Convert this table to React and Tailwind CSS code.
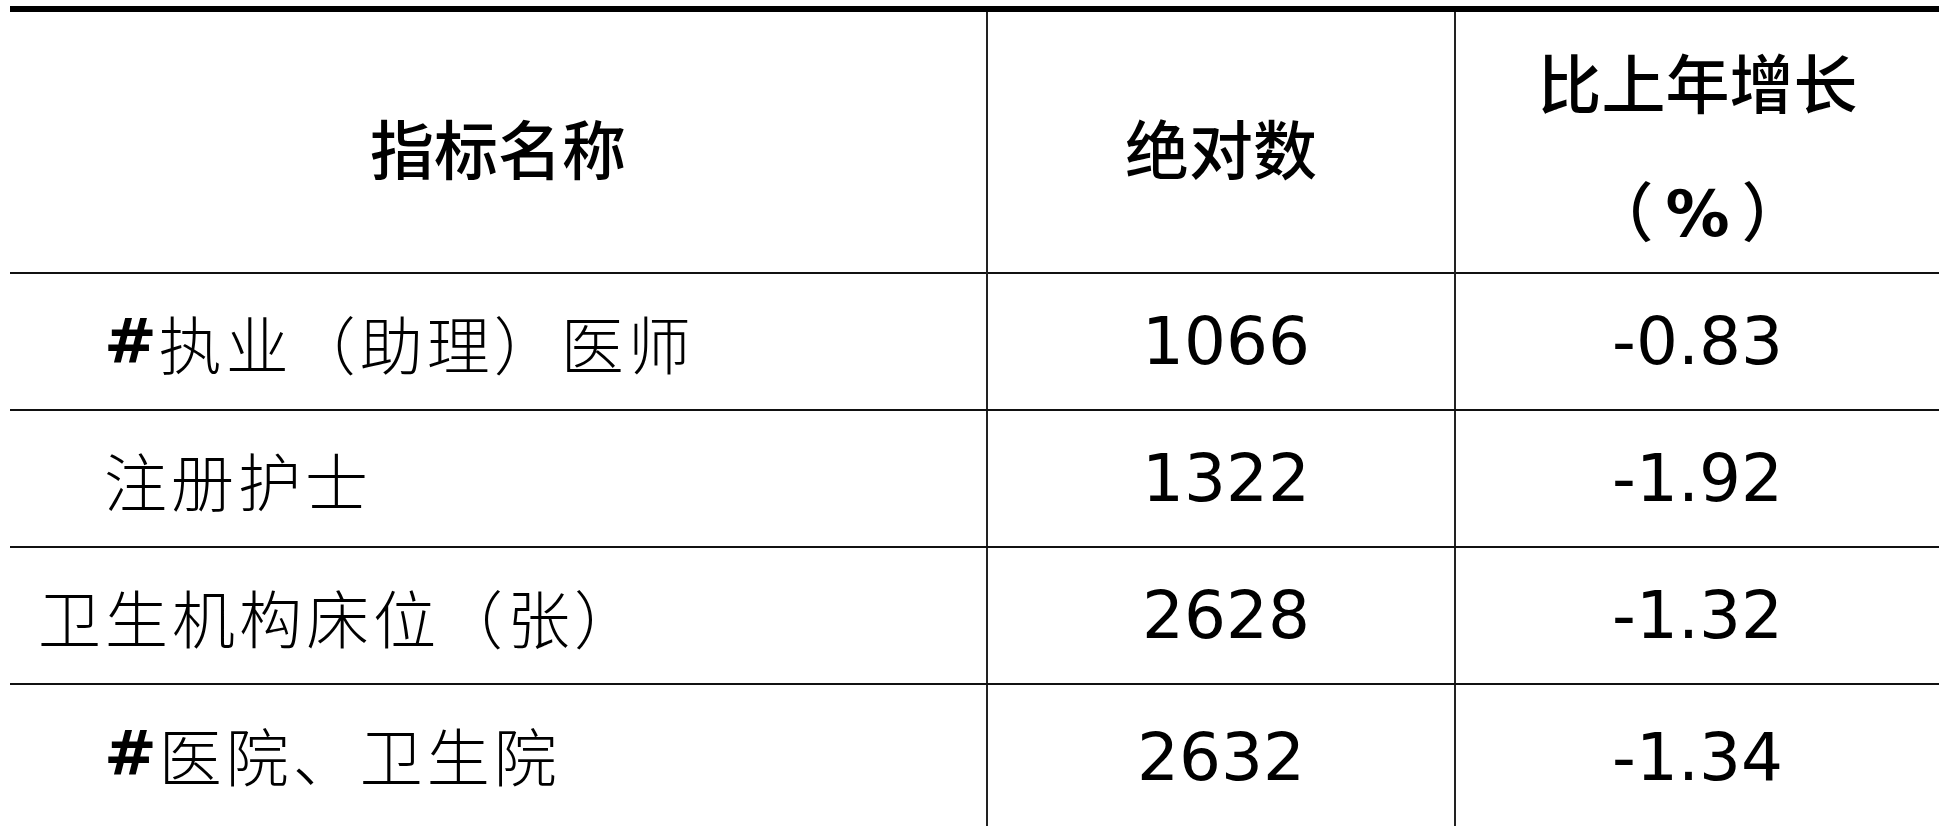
const CJK = "font-['Noto_Sans_CJK_SC',sans-serif]";
const NUM = "font-['DejaVu_Sans',sans-serif]";

const ROWS = [
  { name: '执业（助理）医师', hash: true, indent: true, abs: '1066', pct: '-0.83' },
  { name: '注册护士', indent: true, abs: '1322', pct: '-1.92' },
  { name: '卫生机构床位（张）', abs: '2628', pct: '-1.32' },
  { name: '医院、卫生院', hash: true, indent: true, abs: '2632', pct: '-1.34' },
];

function Hash() {
  return <span className={`${NUM} font-bold tracking-normal mr-[2px]`}>#</span>;
}

export default function App() {
  return (
    <div className="h-[826px] w-[1944px] overflow-hidden bg-white text-black pl-[10px] pt-[6px]">
      <div className="w-[1929px] border-t-[6px] border-black">
        {/* Header */}
        <div className="grid grid-cols-[978px_468px_483px] h-[262px] border-b-2 border-[#111]">
          <div className={`flex items-center justify-center border-r-2 border-[#222] ${CJK} font-medium text-[64px] leading-none pt-[2px]`}>
            指标名称
          </div>
          <div className={`flex items-center justify-center border-r-2 border-[#222] ${CJK} font-medium text-[64px] leading-none pt-[2px]`}>
            绝对数
          </div>
          <div className={`flex flex-col items-center justify-center ${CJK} font-medium text-[64px] leading-[128px] pt-[4px]`}>
            <span>比上年增长</span>
            <span>
              （<span className={`${NUM} font-bold mx-[12px]`}>%</span>）
            </span>
          </div>
        </div>

        {/* Body */}
        {ROWS.map((r, i) => (
          <div
            key={r.abs + i}
            className={`grid grid-cols-[978px_468px_483px] ${i === ROWS.length - 1 ? 'h-[160px]' : 'h-[137px] border-b-2 border-[#111]'}`}
          >
            <div
              className={`flex border-r-2 border-[#222] ${CJK} font-light text-[63px] leading-none tracking-[4px] ${i === ROWS.length - 1 ? 'items-start pt-[37px]' : 'items-center'} ${r.indent ? 'pl-[94px]' : 'pl-[28px]'}`}
            >
              {r.hash && <Hash />}
              <span>{r.name}</span>
            </div>
            <div
              className={`flex justify-center border-r-2 border-[#222] ${NUM} text-[66px] leading-none ${i === ROWS.length - 1 ? 'items-start pt-[40px] pl-0' : 'items-center pl-[10px]'}`}
            >
              {r.abs}
            </div>
            <div
              className={`flex justify-center ${NUM} text-[66px] leading-none ${i === ROWS.length - 1 ? 'items-start pt-[40px]' : 'items-center'}`}
            >
              {r.pct}
            </div>
          </div>
        ))}
      </div>
    </div>
  );
}
